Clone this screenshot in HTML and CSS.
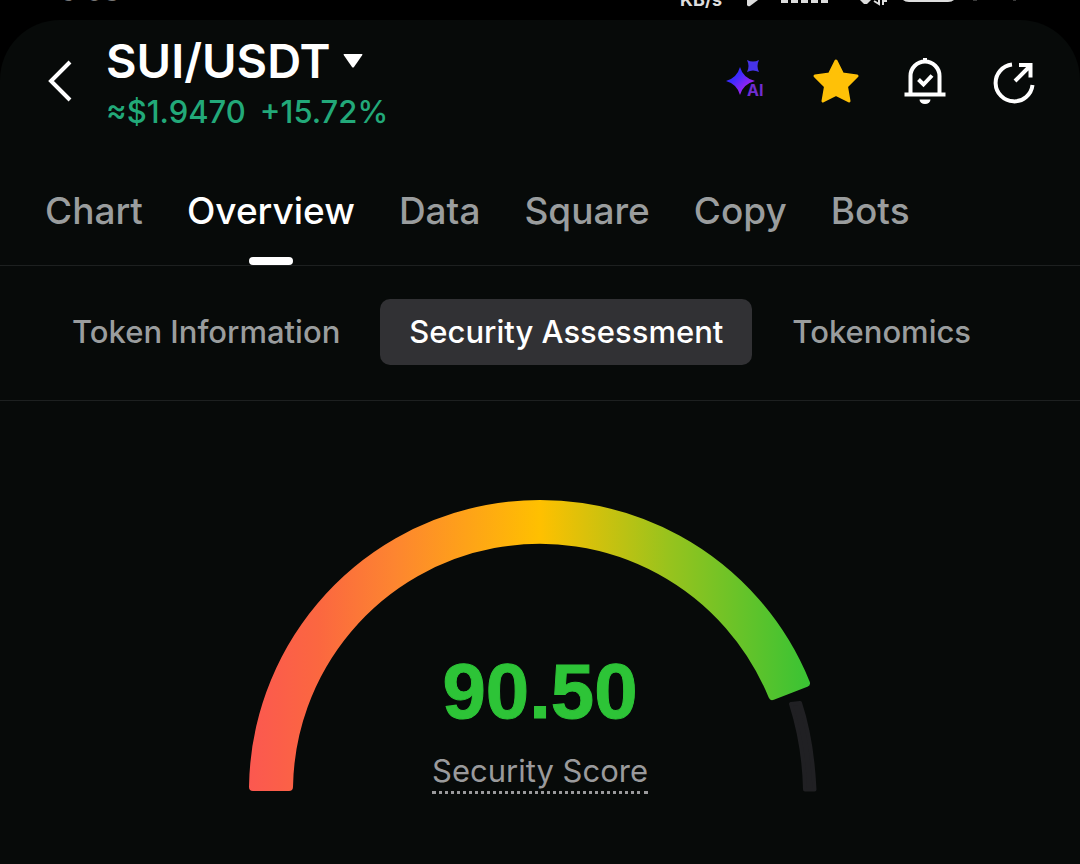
FILE: index.html
```html
<!DOCTYPE html>
<html lang="en">
<head>
<meta charset="utf-8">
<meta name="viewport" content="width=device-width, initial-scale=1">
<title>SUI/USDT Security Assessment</title>
<link rel="stylesheet" href="styles.css">
</head>
<body>
<div class="status">
  <span class="status-time">9:03</span>
  <div class="status-right">
    <span class="status-rate">KB/s</span>
    <svg class="status-icons" width="324" height="20" viewBox="722 0 324 20" aria-hidden="true">
      <path d="M747 0h11l-8 6q-2 1-3-1z" fill="#ddd"/>
      <path d="M781 0h7v3h-7zM791 0h7v3h-7zM801 0h7v3h-7zM811 0h7v3h-7zM821 0h7v3h-7z" fill="#ddd"/>
      <path d="M860 0h11l-4 4h-3z" fill="#ddd"/>
      <path d="M874 1l5 3V0M883 5V0M883 1h4" fill="none" stroke="#ddd" stroke-width="2"/>
      <path d="M903 0h51q-2 2-6 2h-39q-4 0-6-2z" fill="#ddd"/>
      <path d="M973 0h4M1013 0h3" stroke="#777" stroke-width="1"/>
    </svg>
  </div>
</div>
<main class="screen">
  <header class="header">
    <button class="icon-btn back" type="button" aria-label="Back">
      <svg width="24" height="42" viewBox="0 0 24 42"><path d="M22 2L3 21l19 19" fill="none" stroke="#fff" stroke-width="4"/></svg>
    </button>
    <div class="pair">
      <button class="pair-name" type="button">SUI/USDT
        <svg width="20" height="14" viewBox="0 0 20 14" aria-hidden="true"><path d="M1 0h18q1 0 0 1.500L11 13q-1 1-2 0L1 1.500Q0 0 1 0z" fill="#fff"/></svg>
      </button>
      <div class="price"><span>≈$1.9470</span><span>+15.72%</span></div>
    </div>
    <div class="actions">
      <button class="icon-btn" type="button" aria-label="AI">
        <svg width="48" height="48" viewBox="0 0 48 48">
          <defs><linearGradient id="ai" x1="0" y1="0" x2="1" y2="1"><stop offset=".35" stop-color="#3b2bff"/><stop offset=".75" stop-color="#a022f0"/></linearGradient></defs>
          <path d="M17 11Q20 22 32 25 20 28 17 39 14 28 3 25 14 22 17 11z" fill="url(#ai)"/>
          <path d="M24 4q6 3 12 0-3 6 0 12-6-3-12 0 3-6 0-12z" fill="#4634e8"/>
          <text class="ai-text" x="24" y="40">AI</text>
        </svg>
      </button>
      <button class="icon-btn" type="button" aria-label="Favorite">
        <svg width="48" height="48" viewBox="0 0 48 48"><path d="M24 5l6.500 13 14.500 2-10.500 10.500L37 45l-13-6.500L11 45l2.500-14.500L3 20l14.500-2z" fill="#ffc107" stroke="#ffc107" stroke-width="3" stroke-linejoin="round"/></svg>
      </button>
      <button class="icon-btn" type="button" aria-label="Price alert">
        <svg width="48" height="48" viewBox="0 0 48 48"><path d="M9.500 38V20a14.500 14.500 0 0 1 29 0v18M3.500 38.500h41M24 2v5M17.500 23.500l5 5 8.500-9" fill="none" stroke="#fff" stroke-width="4"/><path d="M18.500 43.500h11a5.500 4.500 0 0 1-11 0z" fill="#fff"/></svg>
      </button>
      <button class="icon-btn" type="button" aria-label="Share">
        <svg width="48" height="48" viewBox="0 0 48 48"><path d="M22 8.500A18.500 18.500 0 1 0 42.500 29M25 25L40 10M29 9h11.500v12.500" fill="none" stroke="#fff" stroke-width="4"/></svg>
      </button>
    </div>
  </header>
  <nav class="tabs">
    <a href="#chart">Chart</a>
    <a class="active" href="#overview" aria-current="page">Overview</a>
    <a href="#data">Data</a>
    <a href="#square">Square</a>
    <a href="#copy">Copy</a>
    <a href="#bots">Bots</a>
  </nav>
  <nav class="subtabs">
    <a href="#token">Token Information</a>
    <a class="active" href="#security" aria-current="page">Security Assessment</a>
    <a href="#tokenomics">Tokenomics</a>
  </nav>
  <section class="score">
    <svg class="gauge" width="584" height="296" viewBox="248 498 584 296" role="img" aria-label="Security score 90.50">
      <defs><linearGradient id="arc" gradientUnits="userSpaceOnUse" x1="249" y1="0" x2="831" y2="0"><stop offset="0" stop-color="#fb5850"/><stop offset=".12" stop-color="#fb6740"/><stop offset=".25" stop-color="#fd8530"/><stop offset=".5" stop-color="#ffc000"/><stop offset=".72" stop-color="#98c31d"/><stop offset=".94" stop-color="#42c332"/><stop offset="1" stop-color="#2dc437"/></linearGradient></defs>
      <path d="M253 787A287 287 0 0 1 805.900 683L772.400 696.100A251 251 0 0 0 289 787z" fill="url(#arc)" stroke="url(#arc)" stroke-width="8" stroke-linejoin="round"/>
      <path d="M791 704l9-1Q812 739 814.500 789.500h-9.500Q804 745 791 704z" fill="#202023" stroke="#202023" stroke-width="4" stroke-linejoin="round"/>
    </svg>
    <div class="reading">
      <strong class="value">90.50</strong>
      <button class="label" type="button">Security Score</button>
    </div>
  </section>
</main>
</body>
</html>
```
FILE: styles.css
```css
* { box-sizing: border-box; }
body {
  margin: 0;
  min-height: 100vh;
  display: flex;
  flex-direction: column;
  background: #000;
  color: #fff;
  font-family: Inter, "Liberation Sans", sans-serif;
}
button {
  border: 0;
  padding: 0;
  background: none;
  color: inherit;
  font: inherit;
  cursor: pointer;
}
a { color: inherit; text-decoration: none; }
svg { display: block; }
.status {
  display: flex;
  justify-content: space-between;
  height: 20px;
  padding: 0 34px 0 60px;
  overflow: hidden;
  color: #ddd;
}
.status-time { margin-top: -25px; font-size: 28px; line-height: 32px; color: #777; }
.status-right { display: flex; }
.status-rate { margin-top: -13px; font-size: 18px; line-height: 26px; font-weight: 700; }
.screen {
  flex: 1;
  background: #070a09;
  border-radius: 60px 60px 0 0;
}
.header {
  display: flex;
  align-items: flex-start;
  padding: 12px 42px 0 48px;
}
.icon-btn { flex: none; }
.back { margin: 28px 34px 0 0; }
.pair { flex: 1; }
.pair-name {
  display: flex;
  align-items: center;
  gap: 12px;
  font-size: 47px;
  line-height: 58px;
  font-weight: 600;
}
.price {
  display: flex;
  gap: 14px;
  font-size: 31px;
  line-height: 44px;
  font-weight: 500;
  color: #22a979;
}
.actions { display: flex; gap: 41px; padding-top: 24px; }
.ai-text { font-size: 16px; font-weight: 700; fill: #6f2dd0; }
.tabs {
  display: flex;
  gap: 44px;
  margin-top: 32px;
  padding: 0 45px;
  border-bottom: 1px solid #1d2020;
  font-size: 37px;
  line-height: 48px;
  font-weight: 500;
  color: #9a9d9e;
}
.tabs a { padding: 21px 0 30px; white-space: nowrap; }
.tabs .active, .subtabs .active { color: #fff; }
.tabs .active { position: relative; }
.tabs .active::after {
  content: "";
  position: absolute;
  left: 50%;
  bottom: 0;
  width: 44px;
  height: 8px;
  border-radius: 4px;
  background: #fff;
  transform: translateX(-50%);
}
.subtabs {
  display: flex;
  gap: 11px;
  padding: 33px 43px 35px;
  border-bottom: 1px solid #1d2020;
  font-size: 31px;
  line-height: 66px;
  font-weight: 500;
  color: #9a9d9e;
}
.subtabs a { padding: 0 29px; border-radius: 10px; white-space: nowrap; }
.subtabs .active { background: #313134; }
.score {
  display: grid;
  justify-items: center;
  padding-top: 97px;
}
.gauge, .reading { grid-area: 1 / 1; }
.reading {
  align-self: end;
  display: flex;
  flex-direction: column;
  align-items: center;
  gap: 18px;
}
.value {
  font-family: "Liberation Sans", Arial, sans-serif;
  font-size: 78px;
  line-height: 84px;
  font-weight: 700;
  color: #2dc437;
  -webkit-text-stroke: 1px #2dc437;
}
.label {
  font-size: 31px;
  line-height: 40px;
  color: #9a9a9c;
  border-bottom: 3px dotted #9a9a9c;
}
```
